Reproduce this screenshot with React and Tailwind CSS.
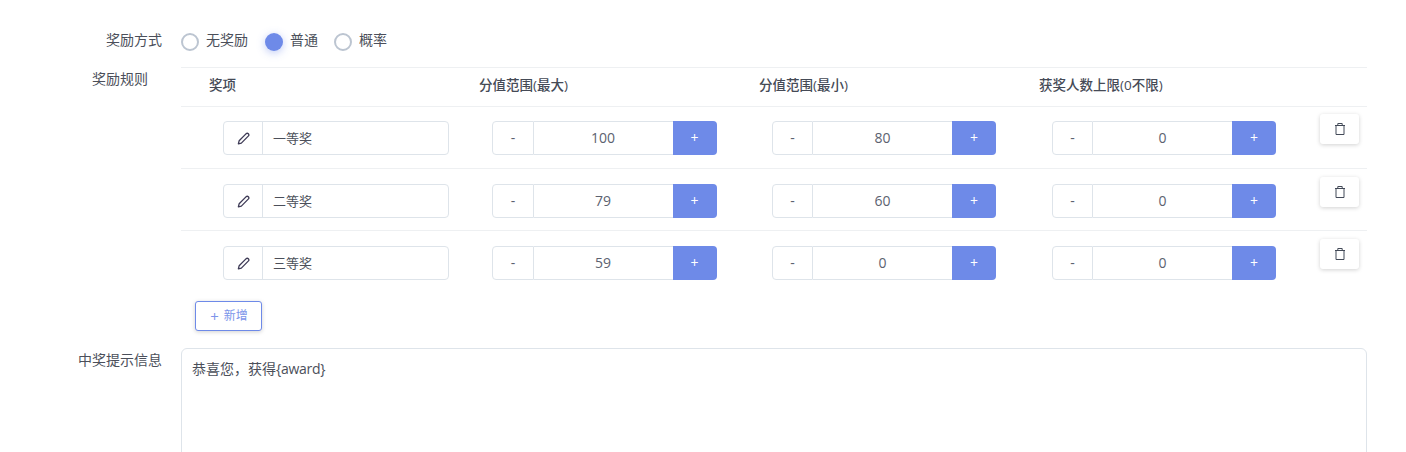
import React from "react";

function Pencil() {
  return (
    <svg width="13" height="13" viewBox="0 0 24 24" fill="none" stroke="#3d3a55" strokeWidth="2.4" strokeLinejoin="round" strokeLinecap="round">
      <path d="M17 3a3 3 0 0 1 4.2 4.2L8 20.5l-5.5 1.5L4 16z" />
    </svg>
  );
}

function Trash() {
  return (
    <svg width="10" height="12" viewBox="0 0 10 12" fill="none" stroke="#434a58" strokeWidth="1">
      <path d="M0 2.5h10M2.8 2.5V.5h4.4v2M1 2.5v9h8v-9" />
    </svg>
  );
}

function Stepper({ value, wide }) {
  return (
    <div className={`flex h-[34px] text-[14px] text-[#5c6270] ${wide ? "w-[225px]" : "w-[224px]"}`}>
      <div className={`flex items-center justify-center rounded-l-[4px] border border-[#dee4ea] ${wide ? "w-[42px]" : "w-[41px]"}`}>-</div>
      <div className={`flex flex-1 items-center justify-center border-y border-[#dee4ea] ${wide ? "pr-[1px]" : ""}`}>{value}</div>
      <div className={`flex w-[44px] items-center justify-center rounded-r-[4px] bg-[#6e8ae8] text-white ${wide ? "pr-[1px]" : ""}`}>+</div>
    </div>
  );
}

function Row({ name, a, b, c, first, last }) {
  const pad = first ? "pt-[14px]" : "pt-[15px]";
  return (
    <div className={`grid h-[62px] grid-cols-[311px_280px_280px_268px_1fr] ${last ? "" : "border-b border-[#eef0f2]"}`}>
      <div className={`pl-[42px] ${pad}`}>
        <div className="flex h-[34px] w-[226px] rounded-[4px] border border-[#dee4ea]">
          <div className="flex w-[39px] items-center justify-center border-r border-[#dee4ea]"><Pencil /></div>
          <div className="flex flex-1 items-center pl-[10px] text-[13px] text-[#4b4f5a]">{name}</div>
        </div>
      </div>
      <div className={pad}><Stepper value={a} wide /></div>
      <div className={pad}><Stepper value={b} /></div>
      <div className={pad}><Stepper value={c} /></div>
      <div className={first ? "pt-[7px]" : "pt-[8px]"}>
        <button className="flex h-[30px] w-[39px] items-center justify-center rounded-[3px] bg-white shadow-[0_1px_4px_rgba(0,0,0,0.18)]"><Trash /></button>
      </div>
    </div>
  );
}

function Radio({ label, on, className }) {
  return (
    <div className={`flex items-center gap-[7px] ${className}`}>
      {on ? (
        <span className="h-[18px] w-[18px] rounded-full bg-[#6e8ae8] shadow-[0_2px_8px_rgba(110,138,232,0.45)]" />
      ) : (
        <span className="h-[18px] w-[18px] rounded-full border-2 border-[#bcc5d1]" />
      )}
      <span className="-mt-[4px]">{label}</span>
    </div>
  );
}

export default function App() {
  return (
    <div
      className="h-[452px] w-[1406px] overflow-hidden bg-white text-[14px] leading-[18px] text-[#4b4f5a]"
      style={{ fontFamily: '"Open Sans","Noto Sans CJK SC",sans-serif' }}
    >
      <div className="flex pl-[60px] pt-[31px]">
        <div className="w-[102px] text-right">奖励方式</div>
        <div className="ml-[19px] flex h-[22px] items-center">
          <Radio label="无奖励" className="w-[84px]" />
          <Radio label="普通" on className="w-[69px]" />
          <Radio label="概率" />
        </div>
      </div>

      <div className="mt-[14px] flex pl-[60px]">
        <div className="w-[88px] pt-[3px] text-right">奖励规则</div>
        <div className="ml-[33px] w-[1186px]">
          <div className="grid h-[40px] grid-cols-[270px_280px_280px_1fr] items-center border-y border-[#eef0f2] pb-[4px] pl-[28px] text-[13.5px] font-medium text-[#454a56]">
            <div>奖项</div>
            <div>分值范围(最大)</div>
            <div>分值范围(最小)</div>
            <div>获奖人数上限(0不限)</div>
          </div>
          <Row name="一等奖" a="100" b="80" c="0" first />
          <Row name="二等奖" a="79" b="60" c="0" />
          <Row name="三等奖" a="59" b="0" c="0" last />
          <button className="ml-[14px] mt-[8px] flex h-[30px] w-[67px] items-center justify-center gap-[5px] rounded-[3px] border border-[#6e8ae8] bg-white pl-[1px] text-[12px] text-[#7d95ea] shadow-[0_1px_4px_rgba(0,0,0,0.18)]">
            <span className="text-[15px]">+</span><span>新增</span>
          </button>
        </div>
      </div>

      <div className="mt-[17px] flex pl-[60px]">
        <div className="w-[102px] pt-[3px] text-right">中奖提示信息</div>
        <div className="ml-[19px] h-[200px] w-[1186px] rounded-[6px] border border-[#dee4ea] px-[10px] py-[11px]">恭喜您，获得<span className="tracking-[-0.3px]">{"{award}"}</span></div>
      </div>
    </div>
  );
}
